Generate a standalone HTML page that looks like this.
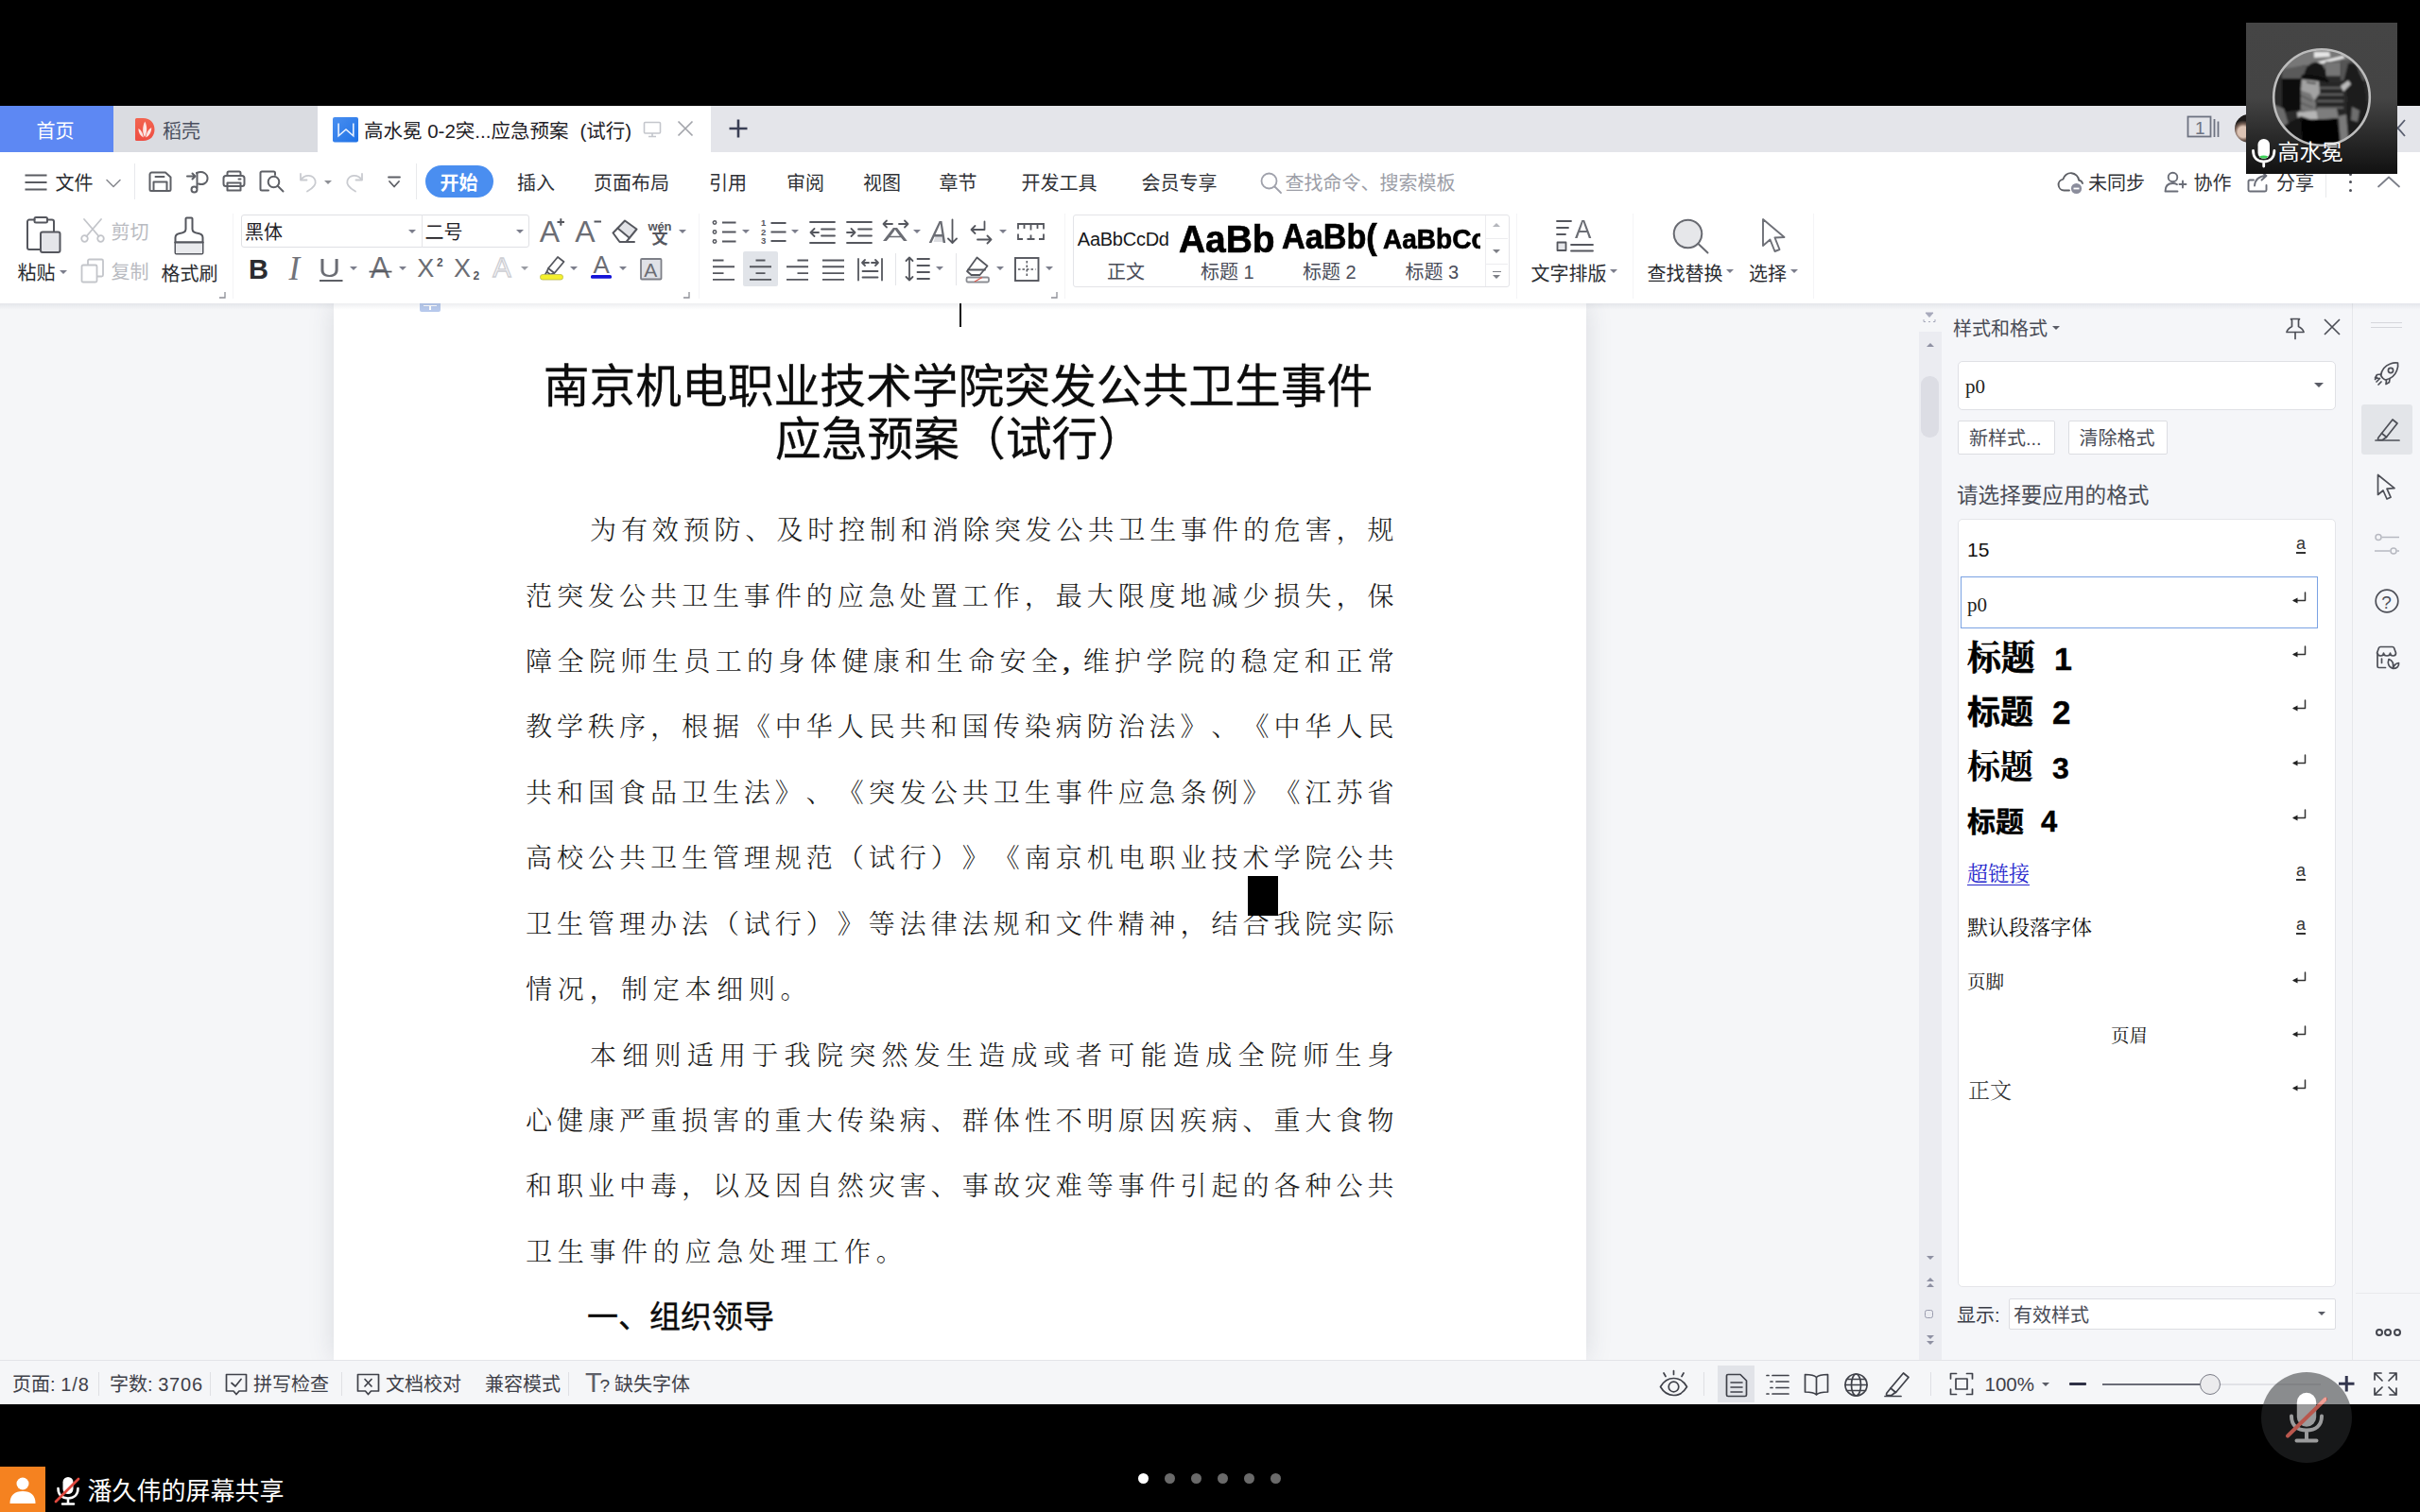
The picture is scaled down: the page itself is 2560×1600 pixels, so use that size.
<!DOCTYPE html>
<html lang="zh-CN">
<head>
<meta charset="utf-8">
<title>WPS 屏幕共享</title>
<style>
*{box-sizing:border-box;margin:0;padding:0}
html,body{width:2560px;height:1600px;overflow:hidden;background:#000}
body{position:relative;font-family:"Liberation Sans","Noto Sans CJK SC",sans-serif;color:#2b2d33;font-size:20px}
.abs{position:absolute}
.t{position:absolute;white-space:nowrap;line-height:1}
svg{position:absolute;overflow:visible}
.ic{fill:none;stroke:#4a4c52;stroke-width:2;stroke-linecap:round;stroke-linejoin:round}
.dd{position:absolute;width:0;height:0;border-left:4px solid transparent;border-right:4px solid transparent;border-top:4.5px solid #5f6167}
.sep{position:absolute;width:1px;background:#e6e7ea}
#tabs{left:0;top:112px;width:2560px;height:49px;background:#e4e5ea}
#menu{left:0;top:161px;width:2560px;height:61px;background:#fff}
#ribbon{left:0;top:222px;width:2560px;height:99px;background:#fff;z-index:3}
#doc{left:0;top:320px;width:2030px;height:1119px;background:#f5f6f8;overflow:hidden}
#page{left:353px;top:0;width:1325px;height:1119px;background:#fff;box-shadow:0 0 26px rgba(60,70,90,.15)}
#vscroll{left:2030px;top:320px;width:24px;height:1119px;background:#ebecf1}
#panel{left:2054px;top:320px;width:434px;height:1119px;background:#f5f6f9}
#side{left:2488px;top:320px;width:72px;height:1119px;background:#f5f6f9}
#status{left:0;top:1439px;width:2560px;height:47px;background:#f5f6f8;border-top:1px solid #e3e4e8}
#bottom{left:0;top:1486px;width:2560px;height:114px;background:#000}
.body{text-spacing-trim:space-all;font-family:"Liberation Serif","Noto Serif CJK SC",serif;font-weight:300;font-size:28px;color:#1c1c1c;line-height:1;white-space:nowrap;position:absolute}
.j{text-align:justify;text-align-last:justify;width:918.5px;left:203px}
.ttl{font-family:"Liberation Sans","Noto Sans CJK SC",sans-serif;font-size:48.75px;color:#0c0c0c;font-weight:400;-webkit-text-stroke:0.3px #0c0c0c}
.hd{font-family:"Liberation Sans","Noto Sans CJK SC",sans-serif;font-size:33px;color:#0c0c0c;font-weight:400;-webkit-text-stroke:0.35px #0c0c0c}
</style>
</head>
<body>
<div class="abs" id="tabs">
<div class="abs" style="left:0;top:0;width:120px;height:49px;background:#5d88f3"></div>
<div class="t" style="left:38.5px;top:16.7px;font-size:20px;color:#fff;">首页</div>
<div class="abs" style="left:120px;top:0;width:216px;height:49px;background:#dadce1"></div>
<svg style="left:143px;top:13.4px" width="21" height="24" viewBox="0 0 21 24"><defs><linearGradient id="dk" x1="0" y1="0" x2="0" y2="1"><stop offset="0" stop-color="#f2644f"/><stop offset="1" stop-color="#ee4d42"/></linearGradient></defs><path d="M1.500 0h7c7.500 0 12 5 12 12s-4.500 12-12 12h-7a1.500 1.500 0 0 1-1.500-1.500v-21a1.500 1.500 0 0 1 1.500-1.500z" fill="url(#dk)"/><g fill="#fff" opacity=".85"><path d="M10 20c-2.500-4.500-2.500-11 .3-16.500 2.700 5.500 2.500 12-.3 16.500z"/><path d="M8.800 20.500c-3-1.500-5.500-5-5.300-9.500 2.800 1.800 4.800 5 5.300 9.500z"/><path d="M11.200 20.500c.5-4.500 2.500-8.500 6-10.500 .2 5-2.500 9-6 10.500z"/></g></svg>
<div class="t" style="left:172.0px;top:17.2px;font-size:20px;color:#4b5060;">稻壳</div>
<div class="abs" style="left:336px;top:0;width:416px;height:49px;background:#fff"></div>
<svg style="left:352px;top:12px" width="27" height="26.500" viewBox="0 0 27 26.500"><defs><linearGradient id="wg" x1="0" y1="0" x2="1" y2="1"><stop offset="0" stop-color="#4a8ff0"/><stop offset="1" stop-color="#1f72e6"/></linearGradient></defs><rect width="27" height="26.500" rx="2" fill="url(#wg)"/><path d="M6.100 6.400V19.800L14 13L21.800 19.800V6.400" fill="none" stroke="#e8f1ff" stroke-width="1.600" stroke-linejoin="miter"/></svg>
<div class="t" style="left:385.0px;top:17.4px;font-size:20.5px;color:#1f2126;">高水冕 0-2突...应急预案<span style="display:inline-block;width:12px"></span>(试行)</div>
<svg style="left:680px;top:15px" width="20" height="20" viewBox="0 0 20 20"><g fill="none" stroke="#c4c6cc" stroke-width="1.600"><rect x="1.500" y="2.500" width="17" height="11.500" rx="1"/><path d="M10 14v3.500M6 17.500h8"/></g></svg>
<svg style="left:716px;top:15px" width="18" height="18" viewBox="0 0 18 18"><path d="M1.500 1.500l15 15M16.500 1.500l-15 15" stroke="#a3a5ab" stroke-width="1.700" fill="none"/></svg>
<svg style="left:770px;top:13px" width="22" height="22" viewBox="0 0 22 22"><path d="M11 1.500v19M1.500 11h19" stroke="#3a3f55" stroke-width="2.600" fill="none"/></svg>
<svg style="left:2313px;top:10px" width="36" height="26" viewBox="0 0 36 26"><g fill="none" stroke="#6e7382" stroke-width="1.800"><rect x="1.500" y="1.500" width="24" height="21"/><path d="M29.500 4v19M33.500 6.500v16.500"/></g></svg>
<div class="t" style="left:2322.0px;top:14.1px;font-size:19px;color:#6e7382;">1</div>
<div class="abs" style="left:2364px;top:9px;width:30px;height:30px;border-radius:50%;background:radial-gradient(circle at 30% 62%,#dcc3b4 0 20%,#7a6358 30%,#1b1918 44%)"></div>
<svg style="left:2527px;top:14px" width="18" height="20" viewBox="0 0 18 20"><path d="M2 1l15 17M17 1L2 18" stroke="#5a5f70" stroke-width="1.800" fill="none"/></svg>
</div>
<div class="abs" id="menu">
<svg style="left:25.500px;top:22.6px" width="24" height="18" viewBox="0 0 24 18"><path d="M.5 1.500h23M.5 9h23M.5 16.500h23" stroke="#5a5c62" stroke-width="1.800" fill="none"/></svg>
<div class="t" style="left:58.5px;top:22.8px;font-size:20px;color:#2a2c31;">文件</div>
<svg style="left:112px;top:27.6px" width="16" height="10" viewBox="0 0 16 10"><path d="M1 1.500l7 7 7-7" class="ic" style="stroke:#8a8c92;stroke-width:1.600"/></svg>
<div class="sep" style="left:142px;top:12px;height:38px;background:#e8e9ec"></div>
<svg style="left:157px;top:19.500px" width="25" height="22" viewBox="0 0 25 22"><g class="ic" style="stroke:#5e6066"><path d="M1.500 3.500a2 2 0 0 1 2-2h14.500l5.500 5v13a1.500 1.500 0 0 1-1.500 1.500h-19a1.500 1.500 0 0 1-1.500-1.500z"/><path d="M5.500 21v-9.500h14v9.500M7.500 6h9"/></g></svg>
<svg style="left:197px;top:19px" width="24" height="25" viewBox="0 0 24 25"><g class="ic" style="stroke:#5e6066"><path d="M1 6.500h8M6.500 3.500l3 3-3 3"/><path d="M11 3c7-3 12 1.500 11.500 6.500-.5 4.500-5 6.500-9.500 5"/><path d="M11.500 3v15.500"/><circle cx="8.500" cy="20.500" r="3"/></g></svg>
<svg style="left:235px;top:19px" width="25" height="23" viewBox="0 0 25 23"><g class="ic" style="stroke:#5e6066"><path d="M5.500 6v-3a1.500 1.500 0 0 1 1.500-1.500h11a1.500 1.500 0 0 1 1.500 1.500v3"/><rect x="1.500" y="6" width="22" height="11" rx="2.500"/><path d="M5.500 13.500h14v8h-14zM17.500 9.500h2"/></g></svg>
<svg style="left:273.500px;top:19px" width="27" height="24" viewBox="0 0 27 24"><g class="ic" style="stroke:#5e6066"><path d="M10 21.500h-7a1.500 1.500 0 0 1-1.500-1.500v-17a1.500 1.500 0 0 1 1.500-1.500h12.500a1.500 1.500 0 0 1 1.500 1.500v2"/><circle cx="15.500" cy="12.500" r="5.800"/><path d="M20 17l5.500 5.500"/></g></svg>
<svg style="left:316px;top:21px" width="20" height="22" viewBox="0 0 20 22"><g class="ic" style="stroke:#c9cbd0;stroke-width:1.800"><path d="M2 2v6.500h6.500"/><path d="M2.500 8c4-6 13-5.500 15 1 1.500 5-3 8.500-8.500 11.500"/></g></svg>
<div class="dd" style="left:342.500px;top:29.500px;border-top-color:#8e9096"></div>
<svg style="left:365px;top:21px" width="20" height="22" viewBox="0 0 20 22"><g class="ic" style="stroke:#c9cbd0;stroke-width:1.800"><path d="M18 2v6.500h-6.500"/><path d="M17.500 8c-4-6-13-5.500-15 1-1.500 5 3 8.500 8.500 11.500"/></g></svg>
<svg style="left:410px;top:25px" width="14" height="13" viewBox="0 0 14 13"><path d="M1 1.500h12M2 6l5 5.500 5-5.500" class="ic" style="stroke:#5e6066;stroke-width:1.800"/></svg>
<div class="sep" style="left:439.500px;top:12px;height:38px;background:#e8e9ec"></div>
<div class="abs" style="left:449.500px;top:14px;width:72px;height:34px;border-radius:17px;background:#4a8ef0"></div>
<div class="t" style="left:465.5px;top:22.8px;font-size:20px;color:#fff;font-weight:700;">开始</div>
<div class="t" style="left:547.0px;top:22.8px;font-size:20px;color:#2f3136;">插入</div>
<div class="t" style="left:628.0px;top:22.8px;font-size:20px;color:#2f3136;">页面布局</div>
<div class="t" style="left:750.0px;top:22.8px;font-size:20px;color:#2f3136;">引用</div>
<div class="t" style="left:832.0px;top:22.8px;font-size:20px;color:#2f3136;">审阅</div>
<div class="t" style="left:913.0px;top:22.8px;font-size:20px;color:#2f3136;">视图</div>
<div class="t" style="left:993.5px;top:22.8px;font-size:20px;color:#2f3136;">章节</div>
<div class="t" style="left:1080.5px;top:22.8px;font-size:20px;color:#2f3136;">开发工具</div>
<div class="t" style="left:1207.5px;top:22.8px;font-size:20px;color:#2f3136;">会员专享</div>
<svg style="left:1332.500px;top:20.6px" width="23" height="23" viewBox="0 0 23 23"><g class="ic" style="stroke:#9fa1ab;stroke-width:1.800"><circle cx="9.500" cy="9.500" r="8"/><path d="M15.500 15.500l6.500 6.500"/></g></svg>
<div class="t" style="left:1359.5px;top:22.8px;font-size:20px;color:#9c9ea7;">查找命令、搜索模板</div>
<svg style="left:2175.500px;top:19px" width="30" height="26" viewBox="0 0 30 26"><g class="ic" style="stroke:#5e6066;stroke-width:1.900"><path d="M13 21.500h-5.500a6 6 0 0 1-1-11.900 8.500 8.500 0 0 1 16.700 1.200c1.800 .3 3.300 1.500 3.800 3.200"/></g><circle cx="20.500" cy="19.500" r="5.600" fill="#8b8d9c"/><path d="M17.500 19.500h6" stroke="#fff" stroke-width="1.800"/></svg>
<div class="t" style="left:2209.0px;top:22.8px;font-size:20px;color:#2f3136;">未同步</div>
<svg style="left:2289px;top:20px" width="25" height="24" viewBox="0 0 25 24"><g class="ic" style="stroke:#6b6e78;stroke-width:1.900"><circle cx="9.500" cy="6.500" r="4.800"/><path d="M1.500 21.500c0-6 3.500-8.500 8-8.500 2 0 3.500 .5 4.500 1.200M1.500 21.500h13M20 10.500v7M16.500 14h7"/></g></svg>
<div class="t" style="left:2320.5px;top:22.8px;font-size:20px;color:#2f3136;">协作</div>
<svg style="left:2377px;top:20px" width="25" height="23" viewBox="0 0 25 23"><g class="ic" style="stroke:#6b6e78;stroke-width:1.900"><path d="M7 9.500h-4a1.500 1.500 0 0 0-1.500 1.500v9a1.500 1.500 0 0 0 1.500 1.500h16a1.500 1.500 0 0 0 1.500-1.500v-5"/><path d="M8 15.500c.5-6 4.500-10 12-10.500M15.500 1l5 4-5 4.500"/></g></svg>
<div class="t" style="left:2408.0px;top:22.8px;font-size:20px;color:#2f3136;">分享</div>
<div class="sep" style="left:2460px;top:14px;height:34px;background:#e8e9ec"></div>
<div class="abs" style="left:2484.500px;top:21.6px;width:3px;height:3px;border-radius:50%;background:#4d4f57"></div>
<div class="abs" style="left:2484.500px;top:30.1px;width:3px;height:3px;border-radius:50%;background:#4d4f57"></div>
<div class="abs" style="left:2484.500px;top:38.6px;width:3px;height:3px;border-radius:50%;background:#4d4f57"></div>
<svg style="left:2515px;top:24.6px" width="24" height="13" viewBox="0 0 24 13"><path d="M1 11.500l11-10 11 10" class="ic" style="stroke:#7b7e88;stroke-width:1.700"/></svg>
</div>
<div class="abs" id="ribbon">
<svg style="left:27.0px;top:7.0px" width="38" height="40" viewBox="0 0 38 40"><g class="ic" style="stroke:#55575e"><path d="M9.500 3.500h-5.500a2 2 0 0 0-2 2v27.500a2 2 0 0 0 2 2h11"/><path d="M23 3.500h5a2 2 0 0 1 2 2v10"/><rect x="9.500" y="1" width="13.500" height="5.500" rx="1.500"/><rect x="16" y="16.500" width="20.500" height="21.500" rx="2" fill="#e4e5e9"/></g></svg>
<div class="t" style="left:18.5px;top:57.1px;font-size:20px;color:#2a2c31;">粘贴</div>
<div class="dd" style="left:63.0px;top:63.5px;border-top-color:#7c7e8c"></div>
<svg style="left:85.0px;top:9.0px" width="27" height="26" viewBox="0 0 27 26"><g class="ic" style="stroke:#c3c5ca;stroke-width:1.800"><path d="M4 1l15.500 18M22 1L6.500 19"/><circle cx="4.500" cy="21.500" r="3.300"/><circle cx="21.500" cy="21.500" r="3.300"/></g></svg>
<div class="t" style="left:117.5px;top:14.3px;font-size:20px;color:#b9bbc1;">剪切</div>
<svg style="left:85.0px;top:50.5px" width="26" height="27" viewBox="0 0 26 27"><g class="ic" style="stroke:#c3c5ca;stroke-width:1.800"><path d="M8 7v-4a1.500 1.500 0 0 1 1.500-1.500h13a1.500 1.500 0 0 1 1.500 1.500v15a1.500 1.500 0 0 1-1.500 1.500h-4.500"/><rect x="1.500" y="7.500" width="16" height="18" rx="1.500"/></g></svg>
<div class="t" style="left:117.5px;top:56.0px;font-size:20px;color:#b9bbc1;">复制</div>
<svg style="left:184.0px;top:7.0px" width="32" height="41" viewBox="0 0 32 41"><g class="ic" style="stroke:#55575e"><path d="M12.500 2.500a1 1 0 0 1 1-1h5a1 1 0 0 1 1 1v11c0 2.500 2.500 4 6.500 4.500 3 .5 4.500 2 4.500 4.500v16a1 1 0 0 1-1 1h-27a1 1 0 0 1-1-1v-16c0-2.500 1.500-4 4.500-4.500 4-.5 6.500-2 6.500-4.500z" fill="#fff"/><path d="M1.500 27.500h29" /><path d="M2 28h28v11h-28z" fill="#e9eaed" stroke="none"/><path d="M1.500 27.500h29"/></g></svg>
<div class="t" style="left:170.5px;top:57.7px;font-size:20px;color:#2a2c31;">格式刷</div>
<svg style="left:230.5px;top:86.0px" width="8" height="8" viewBox="0 0 8 8"><path d="M7 1v6h-6" fill="none" stroke="#8d8f96" stroke-width="1.300"/></svg>
<div class="sep" style="left:246.0px;top:4px;height:90px;background:#f4f4f6"></div>
<div class="abs" style="left:255px;top:4.500px;width:305px;height:35.500px;border:1px solid #dfe0e4;border-radius:3px;background:#fff"></div>
<div class="sep" style="left:445.500px;top:5px;height:34.500px;background:#e4e5e8"></div>
<div class="t" style="left:259.0px;top:14.2px;font-size:20px;color:#1f2126;">黑体</div>
<div class="dd" style="left:432.0px;top:20.5px;border-top-color:#7c7e8c"></div>
<div class="t" style="left:449.5px;top:14.2px;font-size:20px;color:#1f2126;">二号</div>
<div class="dd" style="left:545.5px;top:20.5px;border-top-color:#7c7e8c"></div>
<div class="t" style="left:570.7px;top:6.7px;font-size:32px;color:#6b6d74;">A</div>
<svg style="left:571.0px;top:7.5px" width="28" height="27" viewBox="0 0 28 27"><path d="M18.500 5h7.500M22.300 1.300v7.500" stroke="#55575e" stroke-width="2" fill="none"/></svg>
<div class="t" style="left:608.2px;top:6.7px;font-size:32px;color:#6b6d74;">A</div>
<svg style="left:608.5px;top:7.5px" width="28" height="27" viewBox="0 0 28 27"><path d="M19.500 4.500h7.500" stroke="#55575e" stroke-width="2" fill="none"/></svg>
<svg style="left:647.0px;top:10.0px" width="28" height="26" viewBox="0 0 28 26"><path d="M6.500 9.500L14 1.500l12.500 9-7.500 9z" fill="#e1e2e6"/><g class="ic" style="stroke:#55575e"><path d="M1.500 14.500l12.500-13 12.500 9-11 13.500h-7z"/><path d="M6.500 9.500l12 10"/><path d="M15 24h9"/></g></svg>
<div class="t" style="left:685.5px;top:11.4px;font-size:13px;color:#55575e;font-weight:700;letter-spacing:-0.2px;">wén</div>
<div class="t" style="left:689.5px;top:22.1px;font-size:17px;color:#55575e;font-weight:700;">文</div>
<div class="dd" style="left:718.0px;top:20.5px;border-top-color:#7c7e8c"></div>
<div class="t" style="left:263.0px;top:49.2px;font-size:29px;color:#2a2c31;font-weight:700;">B</div>
<div class="t" style="left:305.5px;top:44.8px;font-size:35px;color:#71737a;font-family:'Liberation Serif',serif;font-style:italic;">I</div>
<div class="t" style="left:337.2px;top:47.1px;font-size:28.5px;color:#6b6d74;transform:scaleX(1.12);transform-origin:0 0;">U</div>
<svg style="left:338.0px;top:50.0px" width="25" height="27" viewBox="0 0 25 27"><path d="M0 25h24.500" fill="none" stroke="#55575e" stroke-width="1.900"/></svg>
<div class="dd" style="left:370.0px;top:59.7px;border-top-color:#7c7e8c"></div>
<div class="t" style="left:391.8px;top:47.3px;font-size:30.7px;color:#6b6d74;">A</div>
<svg style="left:390.0px;top:49.5px" width="25" height="26" viewBox="0 0 25 26"><path d="M.5 15.500h24" stroke="#55575e" stroke-width="1.700"/></svg>
<div class="dd" style="left:422.0px;top:59.7px;border-top-color:#7c7e8c"></div>
<div class="t" style="left:441.3px;top:48.8px;font-size:27px;color:#6b6d74;">X</div>
<div class="t" style="left:462.0px;top:50.4px;font-size:12px;color:#55575e;font-weight:700;">2</div>
<div class="t" style="left:480.0px;top:48.8px;font-size:27px;color:#6b6d74;">X</div>
<div class="t" style="left:500.5px;top:64.4px;font-size:12px;color:#55575e;font-weight:700;">2</div>
<div class="t" style="left:521.3px;top:47.2px;font-size:29px;color:#fafafb;-webkit-text-stroke:1.300px #cdced3;">A</div>
<div class="dd" style="left:550.8px;top:59.7px;border-top-color:#9a9ca3"></div>
<svg style="left:571.0px;top:48.0px" width="26" height="29" viewBox="0 0 26 29"><g class="ic" style="stroke:#55575e;stroke-width:1.800"><path d="M9 14l10-12 6.500 5-10 12z"/><path d="M9 14l-1.500 3.500 3.500 3 4-1.500M7.500 17.500l-2 3.500"/></g><rect x="0.500" y="20.500" width="24" height="5.500" rx="2.500" fill="#f4f02c" stroke="#b9b84a" stroke-width="0.800"/></svg>
<div class="dd" style="left:603.0px;top:59.7px;border-top-color:#7c7e8c"></div>
<div class="t" style="left:627.6px;top:45.9px;font-size:25.8px;color:#6b6d74;">A</div>
<svg style="left:624.5px;top:48.0px" width="23" height="29" viewBox="0 0 23 29"><rect x="0" y="21" width="22" height="3.800" rx="1.500" fill="#1414d8"/></svg>
<div class="dd" style="left:655.0px;top:59.7px;border-top-color:#7c7e8c"></div>
<svg style="left:676.5px;top:50.5px" width="24" height="24" viewBox="0 0 24 24"><rect x="1" y="1" width="21.500" height="21.500" rx="1" fill="#e0e2e7" stroke="#7d7f87" stroke-width="1.800"/></svg>
<div class="t" style="left:681.3px;top:52.5px;font-size:21px;color:#6b6d74;">A</div>
<svg style="left:722.0px;top:86.0px" width="8" height="8" viewBox="0 0 8 8"><path d="M7 1v6h-6" fill="none" stroke="#8d8f96" stroke-width="1.300"/></svg>
<div class="sep" style="left:738.5px;top:4px;height:90px;background:#f4f4f6"></div>
<svg style="left:753.0px;top:11.0px" width="27" height="25" viewBox="0 0 27 25"><g fill="#fff" stroke="#55575e" stroke-width="1.500"><circle cx="3" cy="2.500" r="1.700"/><circle cx="3" cy="12.500" r="1.700"/><circle cx="3" cy="22.500" r="1.700"/></g><path d="M11 2.500h14.500M11 12.500h14.500M11 22.500h14.500" stroke="#55575e" stroke-width="1.800" fill="none"/></svg>
<div class="dd" style="left:784.5px;top:20.5px;border-top-color:#7c7e8c"></div>
<svg style="left:805.0px;top:9.0px" width="27" height="28" viewBox="0 0 27 28"><path d="M10.500 5h16M10.500 14.500h16M10.500 24h16" stroke="#55575e" stroke-width="1.800" fill="none"/><text x="0" y="8" font-size="9.500" font-weight="700" fill="#55575e" font-family="Liberation Sans,sans-serif">1</text><text x="0" y="17.500" font-size="9.500" font-weight="700" fill="#55575e" font-family="Liberation Sans,sans-serif">2</text><text x="0" y="27" font-size="9.500" font-weight="700" fill="#55575e" font-family="Liberation Sans,sans-serif">3</text></svg>
<div class="dd" style="left:836.5px;top:20.5px;border-top-color:#7c7e8c"></div>
<svg style="left:856.0px;top:11.0px" width="28" height="25" viewBox="0 0 28 25"><path d="M1 2h26M13 9.500h14M13 16.500h14M1 24h26M10 13H1.500M5.500 9l-4 4 4 4" stroke="#55575e" stroke-width="1.800" fill="none" stroke-linecap="round" stroke-linejoin="round"/></svg>
<svg style="left:895.0px;top:11.0px" width="28" height="25" viewBox="0 0 28 25"><path d="M1 2h26M13 9.500h14M13 16.500h14M1 24h26M1 13h8.500M5.500 9l4 4-4 4" stroke="#55575e" stroke-width="1.800" fill="none" stroke-linecap="round" stroke-linejoin="round"/></svg>
<svg style="left:933.0px;top:9.0px" width="29" height="28" viewBox="0 0 29 28"><g class="ic" style="stroke:#55575e;stroke-width:1.800"><path d="M1.500 6h9.500M18 6h9.500M5 2.500l-3.500 3.500 3.500 3.500M24 2.500l3.500 3.500-3.500 3.500"/></g></svg>
<div class="t" style="left:934.3px;top:16.8px;font-size:19.5px;color:#6b6d74;transform:scaleX(1.98);transform-origin:0 0;">A</div>
<div class="dd" style="left:966.0px;top:20.5px;border-top-color:#7c7e8c"></div>
<svg style="left:985.0px;top:9.0px" width="29" height="28" viewBox="0 0 29 28"><path d="M2.500 25l2.500-7h8v7z" fill="#dcdde1"/><g class="ic" style="stroke:#55575e;stroke-width:1.800"><path d="M22.500 1.500v24M18 21.500l4.500 4.500 4.500-4.500"/></g></svg>
<div class="t" style="left:983.5px;top:6.6px;font-size:33px;color:#6b6d74;font-style:italic;transform:scaleX(.8);transform-origin:0 0;">A</div>
<svg style="left:1025.0px;top:11.0px" width="26" height="26" viewBox="0 0 26 26"><g class="ic" style="stroke:#55575e;stroke-width:1.800"><path d="M16.500 1.500v8.500h-14M6.500 6l-4 4 4 4"/><path d="M9 20.500h14.500M19.500 16.500l4 4-4 4"/></g></svg>
<div class="dd" style="left:1057.0px;top:20.5px;border-top-color:#7c7e8c"></div>
<svg style="left:1075.5px;top:14.0px" width="29" height="18" viewBox="0 0 29 18"><g fill="none" stroke="#55575e" stroke-width="1.800"><path d="M1 6.500v-5.500h27v5.500M7.500 1v5M14.500 1v6.500M21.500 1v5"/><path d="M1 11.500v5.500h5M10.500 17h8M14.500 12.500v4.500M23 17h5v-5.500" /></g></svg>
<svg style="left:754.0px;top:50.5px" width="24" height="26" viewBox="0 0 24 26"><path d="M0 2.5H11.5M0 9.3H23M0 16.1H11.5M0 22.9H23" stroke="#55575e" stroke-width="1.900" fill="none"/></svg>
<div class="abs" style="left:786px;top:43.500px;width:37px;height:37px;background:#e1e4e9;border-radius:2px"></div>
<svg style="left:793.0px;top:50.5px" width="24" height="26" viewBox="0 0 24 26"><path d="M6.5 2.5H16.5M0 9.3H23M6.5 16.1H16.5M0 22.9H23" stroke="#55575e" stroke-width="1.900" fill="none"/></svg>
<svg style="left:832.0px;top:50.5px" width="24" height="26" viewBox="0 0 24 26"><path d="M11.5 2.5H23M0 9.3H23M11.5 16.1H23M0 22.9H23" stroke="#55575e" stroke-width="1.900" fill="none"/></svg>
<svg style="left:870.0px;top:50.5px" width="24" height="26" viewBox="0 0 24 26"><path d="M0 2.5H23M0 9.3H23M0 16.1H23M0 22.9H23" stroke="#55575e" stroke-width="1.900" fill="none"/></svg>
<svg style="left:906.5px;top:50.5px" width="27" height="25" viewBox="0 0 27 25"><g fill="none" stroke="#55575e" stroke-width="1.800" stroke-linecap="round" stroke-linejoin="round"><path d="M1 1v22.500M26 1v22.500M5 5h7M15 5h7M8 2l-3 3 3 3M19 2l3 3-3 3"/><path d="M5.500 14h16M5.500 20.500h16"/></g></svg>
<div class="sep" style="left:946.5px;top:46px;height:34px;background:#e4e5e8"></div>
<svg style="left:956.5px;top:49.0px" width="28" height="27" viewBox="0 0 28 27"><g fill="none" stroke="#55575e" stroke-width="1.800" stroke-linecap="round" stroke-linejoin="round"><path d="M5 1.500v24M1.500 5l3.500-3.500 3.500 3.500M1.500 22l3.500 3.500 3.500-3.500"/><path d="M13.500 3h12.500M13.500 10h12.500M13.500 17h12.500M13.500 24h12.500"/></g></svg>
<div class="dd" style="left:990.0px;top:59.7px;border-top-color:#7c7e8c"></div>
<div class="sep" style="left:1010.5px;top:46px;height:34px;background:#e4e5e8"></div>
<svg style="left:1021.0px;top:48.5px" width="27" height="29" viewBox="0 0 27 29"><g class="ic" style="stroke:#55575e;stroke-width:1.800"><path d="M12.500 1.500l11 9-8 9.500h-9l-4.500-4z"/><path d="M3 14.500h18"/><rect x="1.500" y="22.500" width="23.500" height="5" rx="1.500" style="stroke:#8b8d93"/></g><path d="M10 27l8-4.500" stroke="#e05a4e" stroke-width="1.300"/></svg>
<div class="dd" style="left:1054.0px;top:59.7px;border-top-color:#7c7e8c"></div>
<svg style="left:1073.0px;top:50.0px" width="27" height="26" viewBox="0 0 27 26"><rect x="1" y="1" width="24.500" height="24" fill="none" stroke="#55575e" stroke-width="1.900"/><path d="M13.300 4v18M4 13h18.500" stroke="#55575e" stroke-width="1.500" stroke-dasharray="2.500 2" fill="none"/></svg>
<div class="dd" style="left:1106.0px;top:59.7px;border-top-color:#7c7e8c"></div>
<svg style="left:1111.0px;top:86.0px" width="8" height="8" viewBox="0 0 8 8"><path d="M7 1v6h-6" fill="none" stroke="#8d8f96" stroke-width="1.300"/></svg>
<div class="sep" style="left:1126.0px;top:4px;height:90px;background:#f4f4f6"></div>
<div class="abs" style="left:1135px;top:5px;width:461.500px;height:77px;border:1px solid #e3e4e8;border-radius:3px;background:#fff;overflow:hidden"></div>
<div class="sep" style="left:1570.500px;top:6px;height:75px;background:#ececef"></div>
<div class="abs" style="left:1571px;top:29.500px;width:24px;height:1px;background:#ececef"></div><div class="abs" style="left:1571px;top:56.500px;width:24px;height:1px;background:#ececef"></div>
<div class="t" style="left:1139.8px;top:20.7px;font-size:20px;color:#16171a;letter-spacing:-0.25px;">AaBbCcDd</div>
<div class="t" style="left:1171.0px;top:56.3px;font-size:20px;color:#4a4d59;">正文</div>
<div class="abs" style="left:1245.0px;top:6px;width:106.5px;height:52px;overflow:hidden"><div class="t" style="left:2.3px;top:4.5px;font-size:41.4px;font-weight:700;color:#000;-webkit-text-stroke:0.7px #000;transform:scaleX(0.94);transform-origin:0 0">AaBb</div></div>
<div class="t" style="left:1270.0px;top:56.3px;font-size:20px;color:#4a4d59;">标题 1</div>
<div class="abs" style="left:1354.0px;top:6px;width:104.3px;height:52px;overflow:hidden"><div class="t" style="left:1.5px;top:4.4px;font-size:37.6px;font-weight:700;color:#000;-webkit-text-stroke:0.7px #000;transform:scaleX(0.91);transform-origin:0 0">AaBb(</div></div>
<div class="t" style="left:1378.0px;top:56.3px;font-size:20px;color:#4a4d59;">标题 2</div>
<div class="abs" style="left:1461.0px;top:6px;width:105.3px;height:52px;overflow:hidden"><div class="t" style="left:2.3px;top:9.7px;font-size:30px;font-weight:700;color:#000;-webkit-text-stroke:0.7px #000;transform:scaleX(0.935);transform-origin:0 0">AaBbCc</div></div>
<div class="t" style="left:1486.5px;top:56.3px;font-size:20px;color:#4a4d59;">标题 3</div>
<div class="dd" style="left:1579px;top:14px;border-top:none;border-bottom:4.500px solid #b4b6bc"></div>
<div class="dd" style="left:1579px;top:42px;border-top-color:#7d7f86"></div><div class="abs" style="left:1579px;top:39px;width:8px;height:1.500px;background:#7d7f86;display:none"></div>
<div class="abs" style="left:1578.500px;top:64.500px;width:9px;height:1.600px;background:#7d7f86"></div><div class="dd" style="left:1579px;top:68.500px;border-top-color:#7d7f86"></div>
<div class="sep" style="left:1604.0px;top:4px;height:90px;background:#f4f4f6"></div>
<svg style="left:1646.0px;top:9.5px" width="41" height="36" viewBox="0 0 41 36"><g fill="none" stroke="#55575e" stroke-width="1.800" stroke-linecap="round" stroke-linejoin="round"><path d="M1 2h15M1 9h12M1 16h9"/><rect x="1.500" y="24.500" width="9" height="8.500" fill="#e6e7ea"/><path d="M16 33.500h23M16 27h23"/></g></svg>
<div class="t" style="left:1665.8px;top:7.1px;font-size:28px;color:#6b6d74;transform:scaleX(.93);transform-origin:0 0;">A</div>
<div class="t" style="left:1619.5px;top:57.7px;font-size:20px;color:#2a2c31;">文字排版</div>
<div class="dd" style="left:1703.0px;top:63.0px;border-top-color:#7c7e8c"></div>
<div class="sep" style="left:1726.5px;top:4px;height:90px;background:#f4f4f6"></div>
<svg style="left:1769.0px;top:7.5px" width="40" height="40" viewBox="0 0 40 40"><g fill="none" stroke="#686a71" stroke-width="2" stroke-linecap="round"><circle cx="16.500" cy="17.500" r="14.800" fill="#e6e7ea"/><path d="M27.500 28l10 9.500"/></g></svg>
<div class="t" style="left:1742.5px;top:57.7px;font-size:20px;color:#2a2c31;">查找替换</div>
<div class="dd" style="left:1825.5px;top:63.0px;border-top-color:#7c7e8c"></div>
<svg style="left:1863.0px;top:8.0px" width="28" height="39" viewBox="0 0 28 39"><path d="M2 2v28l7.500-6.500 5 12.500 5-2-5-12.500 10-.5z" fill="none" stroke="#6e7077" stroke-width="1.900" stroke-linejoin="round"/></svg>
<div class="t" style="left:1850.0px;top:57.7px;font-size:20px;color:#2a2c31;">选择</div>
<div class="dd" style="left:1893.5px;top:63.0px;border-top-color:#7c7e8c"></div>
<div class="sep" style="left:1917.5px;top:4px;height:90px;background:#f4f4f6"></div>
<div class="abs" style="left:0;top:99px;width:2560px;height:7px;background:linear-gradient(rgba(80,90,110,.10),rgba(80,90,110,0));z-index:5"></div>
</div>
<div class="abs" id="doc"><div class="abs" id="page">
<div class="abs" style="left:91px;top:0;width:22px;height:10px;background:#b7c9ec;border-radius:0 0 2px 2px"><div class="abs" style="left:4px;top:2.500px;width:14px;height:1.500px;background:#fff"></div><div class="abs" style="left:10.200px;top:2.500px;width:1.600px;height:5px;background:#fff"></div></div>
<div class="abs" style="left:662px;top:1px;width:2px;height:25px;background:#111"></div>
<div class="t ttl" style="left:-2px;width:1325px;text-align:center;top:64.8px">南京机电职业技术学院突发公共卫生事件</div>
<div class="t ttl" style="left:0;width:1325px;text-align:center;top:121.3px;left:-0.5px">应急预案（试行）</div>
<div class="body j" style="top:228.2px;left:271px;width:850.5px;">为有效预防、及时控制和消除突发公共卫生事件的危害，规</div>
<div class="body j" style="top:297.6px;">范突发公共卫生事件的应急处置工作，最大限度地减少损失，保</div>
<div class="body" style="top:366.9px;left:203px;letter-spacing:5.44px">障全院师生员工的身体健康和生命安全<span style="display:inline-block;width:21.2px;letter-spacing:0;font-weight:700">,</span>维护学院的稳定和正常</div>
<div class="body j" style="top:436.4px;">教学秩序，根据《中华人民共和国传染病防治法》、《中华人民</div>
<div class="body j" style="top:505.9px;">共和国食品卫生法》、《突发公共卫生事件应急条例》《江苏省</div>
<div class="body j" style="top:575.2px;">高校公共卫生管理规范（试行）》《南京机电职业技术学院公共</div>
<div class="body j" style="top:644.6px;">卫生管理办法（试行）》等法律法规和文件精神，结合我院实际</div>
<div class="body" style="top:714.0px;left:203px;letter-spacing:5.7px;">情况，制定本细则。</div>
<div class="body j" style="top:783.5px;left:271px;width:850.5px;">本细则适用于我院突然发生造成或者可能造成全院师生身</div>
<div class="body j" style="top:852.9px;">心健康严重损害的重大传染病、群体性不明原因疾病、重大食物</div>
<div class="body j" style="top:922.3px;">和职业中毒，以及因自然灾害、事故灾难等事件引起的各种公共</div>
<div class="body" style="top:991.8px;left:203px;letter-spacing:5.7px;">卫生事件的应急处理工作。</div>
<div class="t hd" style="left:268px;top:1056.7px">一、组织领导</div>
<div class="abs" style="left:967px;top:607px;width:32px;height:42px;background:#000"></div>
</div></div>
<div class="abs" id="vscroll">
<div class="abs" style="left:0.0px;top:0.0px;width:24.0px;height:31.0px;background:#f5f6f8"></div>
<svg style="left:3.5px;top:10.0px" width="14" height="12" viewBox="0 0 14 12"><path d="M3 1h8l-4 4.500zM1 10.500h2M6 10.500h2M11 10.500h2M1 8v2.500M13 8v2.500" fill="#a7a9bb" stroke="#a7a9bb" stroke-width="1"/></svg>
<div class="dd" style="left:8px;top:43px;border-top:none;border-bottom:4.500px solid #8f91a3"></div>
<div class="abs" style="left:2.0px;top:77.5px;width:19.0px;height:65.0px;background:#dcdde4;border-radius:9px"></div>
<div class="dd" style="left:8px;top:1009px;border-top-color:#8f91a3"></div>
<div class="dd" style="left:8px;top:1032px;border-top:none;border-bottom:4.500px solid #8f91a3"></div><div class="dd" style="left:8px;top:1038px;border-top:none;border-bottom:4.500px solid #8f91a3"></div>
<div class="abs" style="left:6.0px;top:1065.5px;width:9.0px;height:9.0px;border:1.500px solid #9a9cae;border-radius:2.500px"></div>
<div class="dd" style="left:8px;top:1093px;border-top-color:#8f91a3"></div><div class="dd" style="left:8px;top:1099px;border-top-color:#8f91a3"></div>
</div>
<div class="abs" id="panel">
<div class="t" style="left:12.0px;top:17.7px;font-size:20px;color:#4a4d57;">样式和格式</div>
<div class="dd" style="left:117px;top:25px;border-top-color:#5a5c66"></div>
<svg style="left:362.0px;top:16.0px" width="24" height="24" viewBox="0 0 24 24"><g fill="none" stroke="#4d4f57" stroke-width="1.700" stroke-linejoin="round" stroke-linecap="round"><path d="M7.500 1.500h9l-1 1.500v6.500c3 1.500 5 3.500 5.500 6h-18c.5-2.500 2.500-4.500 5.500-6v-6.500z"/><path d="M12 15.500v7"/></g></svg>
<svg style="left:404.0px;top:17.0px" width="18" height="18" viewBox="0 0 18 18"><path d="M1 1l16 16M17 1L1 17" stroke="#4d4f57" stroke-width="1.700" fill="none"/></svg>
<div class="abs" style="left:16.5px;top:62.0px;width:400.5px;height:52.0px;background:#fff;border:1px solid #dfe0e5;border-radius:5px"></div>
<div class="t" style="left:25.0px;top:78.7px;font-size:21px;color:#222;font-family:'Liberation Serif','Noto Serif CJK SC',serif;">p0</div>
<div class="dd" style="left:394px;top:85px;border-left-width:5px;border-right-width:5px;border-top-width:5.500px;border-top-color:#5a5c66"></div>
<div class="abs" style="left:16.5px;top:124.5px;width:103.0px;height:36.5px;background:#fff;border:1px solid #dcdde2;border-radius:2px"></div>
<div class="t" style="left:29.0px;top:134.2px;font-size:20px;color:#4a4d57;">新样式...</div>
<div class="abs" style="left:133.5px;top:124.5px;width:105.0px;height:36.5px;background:#fff;border:1px solid #dcdde2;border-radius:2px"></div>
<div class="t" style="left:145.5px;top:134.2px;font-size:20px;color:#4a4d57;">清除格式</div>
<div class="t" style="left:16.0px;top:194.0px;font-size:22.6px;color:#4a4d57;">请选择要应用的格式</div>
<div class="abs" style="left:16.5px;top:229.0px;width:400.5px;height:812.5px;background:#fff;border:1px solid #e4e5e9;border-radius:5px"></div>
<div class="t" style="left:27.0px;top:251.2px;font-size:21px;color:#111;">15</div>
<div class="t" style="left:375.0px;top:246.2px;font-size:18px;color:#333;text-decoration:underline;text-underline-offset:3px;text-decoration-thickness:1.500px;">a</div>
<div class="abs" style="left:20.0px;top:290.0px;width:378.0px;height:55.0px;border:1.500px solid #7aa2e3;background:#fff"></div>
<div class="t" style="left:27.0px;top:309.7px;font-size:21px;color:#222;font-family:'Liberation Serif','Noto Serif CJK SC',serif;">p0</div>
<svg style="left:371.0px;top:306.0px" width="15" height="14" viewBox="0 0 15 14"><g fill="none" stroke="#333" stroke-width="1.500" stroke-linecap="round" stroke-linejoin="round"><path d="M13.500 1v8.500h-12"/></g><path d="M0 9.500l5.500-3v6z" fill="#222"/></svg>
<div class="t" style="left:27.0px;top:358.7px;font-size:36px;color:#000;font-family:'Liberation Serif','Noto Serif CJK SC',serif;font-weight:700;-webkit-text-stroke:0.6px #000;">标题<span style="font-family:'Liberation Sans','Noto Sans CJK SC',sans-serif;font-weight:700;-webkit-text-stroke:0.4px #000;font-size:34px;margin-left:20px">1</span></div>
<svg style="left:371.0px;top:362.5px" width="15" height="14" viewBox="0 0 15 14"><g fill="none" stroke="#333" stroke-width="1.500" stroke-linecap="round" stroke-linejoin="round"><path d="M13.500 1v8.500h-12"/></g><path d="M0 9.500l5.500-3v6z" fill="#222"/></svg>
<div class="t" style="left:27.0px;top:415.7px;font-size:35px;color:#000;font-family:'Liberation Sans','Noto Sans CJK SC',sans-serif;font-weight:700;-webkit-text-stroke:0.4px #000;">标题<span style="font-family:'Liberation Sans','Noto Sans CJK SC',sans-serif;font-weight:700;-webkit-text-stroke:0.4px #000;font-size:35px;margin-left:20px">2</span></div>
<svg style="left:371.0px;top:420.0px" width="15" height="14" viewBox="0 0 15 14"><g fill="none" stroke="#333" stroke-width="1.500" stroke-linecap="round" stroke-linejoin="round"><path d="M13.500 1v8.500h-12"/></g><path d="M0 9.500l5.500-3v6z" fill="#222"/></svg>
<div class="t" style="left:27.0px;top:475.2px;font-size:35px;color:#000;font-family:'Liberation Serif','Noto Serif CJK SC',serif;font-weight:700;-webkit-text-stroke:0.15px #000;">标题<span style="font-family:'Liberation Sans','Noto Sans CJK SC',sans-serif;font-weight:700;-webkit-text-stroke:0.4px #000;font-size:32px;margin-left:20px">3</span></div>
<svg style="left:371.0px;top:478.0px" width="15" height="14" viewBox="0 0 15 14"><g fill="none" stroke="#333" stroke-width="1.500" stroke-linecap="round" stroke-linejoin="round"><path d="M13.500 1v8.500h-12"/></g><path d="M0 9.500l5.500-3v6z" fill="#222"/></svg>
<div class="t" style="left:27.0px;top:534.0px;font-size:30px;color:#000;font-family:'Liberation Sans','Noto Sans CJK SC',sans-serif;font-weight:700;-webkit-text-stroke:0.4px #000;">标题<span style="font-family:'Liberation Sans','Noto Sans CJK SC',sans-serif;font-weight:700;-webkit-text-stroke:0.4px #000;font-size:31px;margin-left:18px">4</span></div>
<svg style="left:371.0px;top:536.0px" width="15" height="14" viewBox="0 0 15 14"><g fill="none" stroke="#333" stroke-width="1.500" stroke-linecap="round" stroke-linejoin="round"><path d="M13.500 1v8.500h-12"/></g><path d="M0 9.500l5.500-3v6z" fill="#222"/></svg>
<div class="t" style="left:27.0px;top:594.2px;font-size:22px;color:#2525cc;font-family:'Liberation Serif','Noto Serif CJK SC',serif;text-decoration:underline;text-underline-offset:4px;text-decoration-thickness:1.300px;font-weight:400;">超链接</div>
<div class="t" style="left:375.0px;top:591.6px;font-size:18px;color:#333;text-decoration:underline;text-underline-offset:3px;text-decoration-thickness:1.500px;">a</div>
<div class="t" style="left:27.0px;top:650.7px;font-size:22px;color:#111;font-family:'Liberation Serif','Noto Serif CJK SC',serif;font-weight:400;">默认段落字体</div>
<div class="t" style="left:375.0px;top:649.2px;font-size:18px;color:#333;text-decoration:underline;text-underline-offset:3px;text-decoration-thickness:1.500px;">a</div>
<div class="t" style="left:27.0px;top:709.9px;font-size:19.5px;color:#111;font-family:'Liberation Serif','Noto Serif CJK SC',serif;font-weight:400;">页脚</div>
<svg style="left:371.0px;top:707.5px" width="15" height="14" viewBox="0 0 15 14"><g fill="none" stroke="#333" stroke-width="1.500" stroke-linecap="round" stroke-linejoin="round"><path d="M13.500 1v8.500h-12"/></g><path d="M0 9.500l5.500-3v6z" fill="#222"/></svg>
<div class="t" style="left:179.0px;top:766.9px;font-size:19.5px;color:#111;font-family:'Liberation Serif','Noto Serif CJK SC',serif;font-weight:400;">页眉</div>
<svg style="left:371.0px;top:764.5px" width="15" height="14" viewBox="0 0 15 14"><g fill="none" stroke="#333" stroke-width="1.500" stroke-linecap="round" stroke-linejoin="round"><path d="M13.500 1v8.500h-12"/></g><path d="M0 9.500l5.500-3v6z" fill="#222"/></svg>
<div class="t" style="left:28.0px;top:823.3px;font-size:23px;color:#333;font-family:'Liberation Serif','Noto Serif CJK SC',serif;font-weight:300;">正文</div>
<svg style="left:371.0px;top:821.5px" width="15" height="14" viewBox="0 0 15 14"><g fill="none" stroke="#333" stroke-width="1.500" stroke-linecap="round" stroke-linejoin="round"><path d="M13.500 1v8.500h-12"/></g><path d="M0 9.500l5.500-3v6z" fill="#222"/></svg>
<div class="t" style="left:16.0px;top:1061.7px;font-size:20px;color:#3a3d47;">显示:</div>
<div class="abs" style="left:71.0px;top:1053.5px;width:346.0px;height:33.0px;background:#fff;border:1px solid #dcdde2;border-radius:2px"></div>
<div class="t" style="left:76.0px;top:1061.7px;font-size:20px;color:#4a4d57;">有效样式</div>
<div class="dd" style="left:398px;top:1068px;border-top-color:#5a5c66"></div>
</div>
<div class="abs" id="side">
<div class="abs" style="left:0.0px;top:0.0px;width:1.0px;height:1119.0px;background:#e6e7eb"></div>
<div class="abs" style="left:20.0px;top:21.0px;width:33.0px;height:1.3px;background:#d5d6db"></div>
<div class="abs" style="left:20.0px;top:25.5px;width:33.0px;height:1.3px;background:#d5d6db"></div>
<svg style="left:23.0px;top:62.0px" width="28" height="28" viewBox="0 0 28 28"><g fill="none" stroke="#4d4f57" stroke-width="1.700" stroke-linecap="round" stroke-linejoin="round"><path d="M10 18.500c-1.500-1.500-2-2.500-2.500-3.500 1-5 4.500-10 10-12 2.500-1 5.500-1.500 8-1 .5 2.500 0 5.500-1 8-2 5.500-7 9-12 10-1-.5-2-1-2.500-1.500z"/><circle cx="18" cy="10" r="2.600"/><path d="M8 14l-4.500 .5-2 3.500 4.500 .5M13.500 20l-.5 4.500 3.500-2 .5-4"/><path d="M3 22l3.500-3.500M5 25l3-3M1.500 19.500l2-2"/></g></svg>
<div class="abs" style="left:9.5px;top:107.5px;width:54.0px;height:53.5px;background:#e3e5e9;border-radius:3px"></div>
<svg style="left:24.0px;top:121.0px" width="27" height="27" viewBox="0 0 27 27"><g fill="none" stroke="#4d4f57" stroke-width="1.700" stroke-linecap="round" stroke-linejoin="round" stroke-width="1.900"><path d="M7.500 17.500l11.500-14.500 5 4-11.500 14.500z"/><path d="M7.500 17.500l-3.500 4.500c-1 1.500-.5 2.500 1 2.500h3.500l4-3"/><path d="M1 25h25"/></g></svg>
<svg style="left:26.0px;top:181.0px" width="24" height="28" viewBox="0 0 24 28"><path d="M1.500 1.500v21l5.500-4.500 4 9 4-1.800-4-9 8-.5z" fill="none" stroke="#4d4f57" stroke-width="1.700" stroke-linecap="round" stroke-linejoin="round" stroke-width="1.900"/></svg>
<svg style="left:23.0px;top:244.0px" width="28" height="24" viewBox="0 0 28 24"><g fill="none" stroke="#b7b9c1" stroke-width="1.500"><circle cx="5" cy="4.500" r="3"/><path d="M8.500 4.500h18.500"/><circle cx="21" cy="19" r="3"/><path d="M1 19h16.500M24.500 19h2.500"/></g></svg>
<svg style="left:23.5px;top:302.5px" width="26" height="26" viewBox="0 0 26 26"><g fill="none" stroke="#4d4f57" stroke-width="1.700" stroke-linecap="round" stroke-linejoin="round"><circle cx="13" cy="13" r="11.800"/></g></svg>
<div class="t" style="left:31.2px;top:308.3px;font-size:19px;color:#4d4f57;">?</div>
<svg style="left:23.0px;top:363.0px" width="28" height="26" viewBox="0 0 28 26"><g fill="none" stroke="#4d4f57" stroke-width="1.700" stroke-linecap="round" stroke-linejoin="round"><path d="M4 9.500v12.500c0 1 .5 1.500 1.500 1.500h7"/><path d="M2.500 8l2-5.500c.3-.7 .8-1 1.500-1h13c.7 0 1.200 .3 1.500 1l2 5.500c0 2-1.500 3-3 3s-3-1-3-3c0 2-1.500 3-3.500 3s-3.500-1-3.500-3c0 2-1.500 3-3 3s-3.500-1-3.500-3z" transform="translate(1,0)"/><path d="M8.500 14v4.500"/><path d="M20.500 24.500c-5-1.500-6-6-4.500-10 3 1 5.500 4 4.500 10zM20.500 24.500c1-4 3-5.500 6-6 .5 3.500-2 6-6 6zM20.500 24.500v-5"/></g></svg>
<div class="abs" style="left:24.5px;top:1086.0px;width:8.0px;height:8.0px;border:2px solid #44464f;border-radius:50%"></div>
<div class="abs" style="left:34.1px;top:1086.0px;width:8.0px;height:8.0px;border:2px solid #44464f;border-radius:50%"></div>
<div class="abs" style="left:43.7px;top:1086.0px;width:8.0px;height:8.0px;border:2px solid #44464f;border-radius:50%"></div>
<div class="abs" style="left:4.0px;top:1048.0px;width:68.0px;height:1.0px;background:#e8e9ed"></div>
</div>
<div class="abs" id="status">
<div class="t" style="left:13.0px;top:15.1px;font-size:20px;color:#3f4149;">页面: <span style="letter-spacing:1px">1/8</span></div>
<div class="abs" style="left:104.0px;top:12.0px;width:1.0px;height:25.0px;background:#dfe0e4"></div>
<div class="t" style="left:116.0px;top:15.1px;font-size:20px;color:#3f4149;">字数: <span style="letter-spacing:0.8px">3706</span></div>
<div class="abs" style="left:222.0px;top:12.0px;width:1.0px;height:25.0px;background:#dfe0e4"></div>
<svg style="left:238.0px;top:12.5px" width="24" height="24" viewBox="0 0 24 24"><g fill="none" stroke="#3f4149" stroke-width="1.700" stroke-linecap="round" stroke-linejoin="round"><path d="M1.500 1.500h21v17.500h-7.500l-3 3.500-3-3.500h-7.500z"/><path d="M7 10.500l4 3.500 6-7.500"/></g></svg>
<div class="t" style="left:268.0px;top:15.1px;font-size:20px;color:#3f4149;">拼写检查</div>
<div class="abs" style="left:361.0px;top:12.0px;width:1.0px;height:25.0px;background:#dfe0e4"></div>
<svg style="left:377.0px;top:12.5px" width="25" height="24" viewBox="0 0 25 24"><g fill="none" stroke="#3f4149" stroke-width="1.700" stroke-linecap="round" stroke-linejoin="round"><path d="M1.500 1.500h22v17.500h-8l-3 3.500-3-3.500h-8z"/><path d="M9 6.500l7 7.500M16 6.500l-7 7.500"/></g></svg>
<div class="t" style="left:408.0px;top:15.1px;font-size:20px;color:#3f4149;">文档校对</div>
<div class="t" style="left:513.0px;top:15.1px;font-size:20px;color:#3f4149;">兼容模式</div>
<div class="abs" style="left:601.0px;top:12.0px;width:1.0px;height:25.0px;background:#dfe0e4"></div>
<div class="t" style="left:619.0px;top:8.5px;font-size:29px;color:#5e6069;">T</div>
<div class="t" style="left:634.5px;top:17.0px;font-size:19px;color:#3f4149;">?</div>
<div class="t" style="left:650.0px;top:15.1px;font-size:20px;color:#3f4149;">缺失字体</div>
<svg style="left:1755.0px;top:9.0px" width="31" height="30" viewBox="0 0 31 30"><g fill="none" stroke="#3f4149" stroke-width="1.700" stroke-linecap="round" stroke-linejoin="round" stroke-width="1.800"><path d="M1.500 18.500c3.500-6 8-9 14-9s10.500 3 14 9c-3.500 6-8 9-14 9s-10.500-3-14-9z"/><circle cx="15.500" cy="18.500" r="5.300"/><path d="M15.500 1.500v4M5 4l2 3.500M26 4l-2 3.500"/></g></svg>
<div class="abs" style="left:1801.5px;top:12.0px;width:1.0px;height:25.0px;background:#dfe0e4"></div>
<div class="abs" style="left:1817.0px;top:5.0px;width:38.5px;height:38.5px;background:#e1e3e8"></div>
<svg style="left:1825.0px;top:12.5px" width="24" height="26" viewBox="0 0 24 26"><g fill="none" stroke="#3f4149" stroke-width="1.700" stroke-linecap="round" stroke-linejoin="round" stroke-width="1.900"><path d="M1.500 3a1.500 1.500 0 0 1 1.500-1.500h13l6.500 6.500v15a1.500 1.500 0 0 1-1.500 1.500h-18a1.500 1.500 0 0 1-1.500-1.500z"/><path d="M6 10h12M6 15h12M6 20h12" stroke-width="1.600"/></g></svg>
<svg style="left:1868.0px;top:13.0px" width="25" height="24" viewBox="0 0 25 24"><g fill="none" stroke="#3f4149" stroke-width="1.700" stroke-linecap="round" stroke-linejoin="round" stroke-width="1.800"><path d="M1 2.500h2M7 2.500h17M5 9h2M11 9h13M5 15.500h2M11 15.500h13M1 22h2M7 22h17"/></g></svg>
<svg style="left:1908.0px;top:12.5px" width="27" height="26" viewBox="0 0 27 26"><g fill="none" stroke="#3f4149" stroke-width="1.700" stroke-linecap="round" stroke-linejoin="round" stroke-width="1.800"><path d="M13.500 4.500c-2-2-5-3-12-3v18.500c7 0 10 1 12 3 2-2 5-3 12-3v-18.500c-7 0-10 1-12 3zM13.500 4.500v18"/></g></svg>
<svg style="left:1951.0px;top:12.5px" width="25" height="25" viewBox="0 0 25 25"><g fill="none" stroke="#3f4149" stroke-width="1.700" stroke-linecap="round" stroke-linejoin="round" stroke-width="1.700"><circle cx="12.500" cy="12.500" r="11.500"/><ellipse cx="12.500" cy="12.500" rx="5" ry="11.500"/><path d="M1 12.500h23M2.500 6.500h20M2.500 18.500h20"/></g></svg>
<svg style="left:1993.0px;top:10.0px" width="29" height="29" viewBox="0 0 29 29"><g fill="none" stroke="#3f4149" stroke-width="1.700" stroke-linecap="round" stroke-linejoin="round" stroke-width="1.900"><path d="M7 19l13.500-16 5.500 4.500-13.500 16z"/><path d="M7 19l-4 5c-1 1.500-.5 2.500 1 2.500h4l4.500-3.500"/><path d="M1 27.500h17"/></g></svg>
<div class="abs" style="left:2042.0px;top:12.0px;width:1.0px;height:25.0px;background:#dfe0e4"></div>
<svg style="left:2062.0px;top:12.0px" width="26" height="25" viewBox="0 0 26 25"><g fill="none" stroke="#3f4149" stroke-width="1.700" stroke-linecap="round" stroke-linejoin="round" stroke-width="1.900"><path d="M1.500 7v-5.500h6M18.500 1.500h6v5.500M24.500 18v5.500h-6M7.500 23.500h-6v-5.500"/><rect x="7" y="7" width="12" height="11"/></g></svg>
<div class="t" style="left:2099.5px;top:15.3px;font-size:20.5px;color:#3f4149;">100%</div>
<div class="dd" style="left:2160px;top:22.500px;border-top-color:#5a5c66"></div>
<div class="abs" style="left:2188.5px;top:22.8px;width:18.0px;height:3.6px;background:#2f3146;border-radius:1px"></div>
<div class="abs" style="left:2224.0px;top:24.0px;width:114.0px;height:1.8px;background:#6b6d78"></div>
<div class="abs" style="left:2338.0px;top:24.0px;width:117.0px;height:1.8px;background:#e1e2e6"></div>
<div class="abs" style="left:2327.0px;top:14.0px;width:22.0px;height:22.0px;background:#ebebed;border:1.700px solid #7a7c86;border-radius:50%"></div>
<svg style="left:2474.0px;top:16.0px" width="16.5" height="16.5" viewBox="0 0 16.5 16.5"><path d="M8.250 0v16.500M0 8.250h16.500" stroke="#34374f" stroke-width="3" fill="none"/></svg>
<svg style="left:2510.0px;top:11.0px" width="27" height="27" viewBox="0 0 27 27"><g fill="none" stroke="#3f4149" stroke-width="1.700" stroke-linecap="round" stroke-linejoin="round" stroke-width="1.900" stroke="#2f3146"><path d="M2 9v-7h7M2 2l8 8M18 2h7v7M25 2l-8 8M25 18v7h-7M25 25l-8-8M9 25h-7v-7M2 25l8-8"/></g></svg>
</div>
<div class="abs" id="bottom">
<div class="abs" style="left:0.0px;top:66.0px;width:48.0px;height:48.0px;background:#f58220"></div>
<svg style="left:9.0px;top:75.0px" width="30" height="30" viewBox="0 0 30 30"><circle cx="15" cy="9" r="6.500" fill="#fff"/><path d="M1.500 30c0-9 5-13 13.500-13s13.500 4 13.500 13z" fill="#fff"/></svg>
<svg style="left:57.0px;top:76.0px" width="30" height="32" viewBox="0 0 30 32"><rect x="9.500" y="1" width="11" height="18" rx="5.500" fill="#fff"/><path d="M4.500 13c0 7 4.500 10.500 10.500 10.500s10.500-3.500 10.500-10.500M15 23.500v5.500M9 29.500h12" fill="none" stroke="#fff" stroke-width="2.600" stroke-linecap="round"/><path d="M2 27l24-24" stroke="#e0483e" stroke-width="2.800" stroke-linecap="round"/></svg>
<div class="t" style="left:92.5px;top:78.9px;font-size:26px;color:#fff;">潘久伟的屏幕共享</div>
<div class="abs" style="left:1203.5px;top:72.5px;width:11.0px;height:11.0px;border-radius:50%;background:#fff"></div>
<div class="abs" style="left:1231.5px;top:72.5px;width:11.0px;height:11.0px;border-radius:50%;background:#6a6a6a"></div>
<div class="abs" style="left:1259.5px;top:72.5px;width:11.0px;height:11.0px;border-radius:50%;background:#6a6a6a"></div>
<div class="abs" style="left:1287.5px;top:72.5px;width:11.0px;height:11.0px;border-radius:50%;background:#6a6a6a"></div>
<div class="abs" style="left:1315.5px;top:72.5px;width:11.0px;height:11.0px;border-radius:50%;background:#6a6a6a"></div>
<div class="abs" style="left:1343.5px;top:72.5px;width:11.0px;height:11.0px;border-radius:50%;background:#6a6a6a"></div>
</div>
<div class="abs" style="left:2376.0px;top:24.0px;width:160.0px;height:160.0px;background:linear-gradient(#454545 0,#444 50%,#2a2a2a 75%,#111 100%)"></div>
<svg style="left:2404px;top:50.800px" width="104" height="104" viewBox="0 0 104 104"><defs><clipPath id="avc"><circle cx="52" cy="52" r="50.500"/></clipPath><filter id="avb" x="-5%" y="-5%" width="110%" height="110%"><feGaussianBlur stdDeviation="0.9"/></filter></defs><g clip-path="url(#avc)"><g filter="url(#avb)"><rect width="104" height="104" fill="#2b2b2b"/><path d="M0 0h104v20l-40 4-30-6-34 8z" fill="#777"/><path d="M44 4h16l1 5-17 1z" fill="#e6e6e6"/><path d="M46 15l29-7 1 2.500-29 7z" fill="#f0f0f0"/><path d="M56 14h16v16h-16z" fill="#4a4a4a"/><path d="M58 15v14M61 15v14M64 15v14M67 15v14M70 15v14" stroke="#bdbdbd" stroke-width="1"/><path d="M72 12h26v22h-26z" fill="#555"/><path d="M10 22l26-4v14l-26 4z" fill="#5a5a5a"/><rect x="46" y="36" width="30" height="34" fill="#262626"/><path d="M47 42h28M47 49h28M47 56h28M47 63h28" stroke="#5e5e5e" stroke-width="1.800"/><path d="M34 26c2-8 8-12 14-11 5 1 7 5 8 10l2 9-26-3z" fill="#161616"/><path d="M31 28c8-1 20 1 29 6l-1 2.500c-9-2-20-4-29-4z" fill="#0e0e0e"/><path d="M31 33l18 2 1 12-6 9-10-2-4-10z" fill="#a2a2a2"/><path d="M36 36l10 1.500" stroke="#333" stroke-width="1.500"/><path d="M28 44l12 4 6 10-2 30-16 2z" fill="#777"/><path d="M30 50l12 6M30 58l13 5M30 66l12 4M30 74l12 3" stroke="#5a5a5a" stroke-width="1.500"/><path d="M10 32h20v34l-6 0-14 2z" fill="#0a0a0a"/><path d="M2 60l10 4 6 20-6 14-12-8z" fill="#6a6a6a"/><path d="M26 68l22-2 14 8-4 8-30 2z" fill="#b5b5b5"/><path d="M12 82l18-10 12 4-6 20-14 8z" fill="#141414"/><path d="M30 76l38-2 4 30h-40z" fill="#060606"/><path d="M46 64l22 0 2 10-22 1z" fill="#7d7d7d"/><path d="M80 16c6-2 10 2 11 8l6 14 4 30-6 22-14 6-4-20 2-24-4-16z" fill="#1b1b1b"/><path d="M72 40l8-6 3 4-8 8z" fill="#b9b9b9"/><path d="M84 62l8 4-2 12-7-2z" fill="#6e6e6e"/><path d="M70 72l8-2 2 26-8 4z" fill="#7a7a7a"/></g></g><circle cx="52" cy="52" r="50.800" fill="none" stroke="#bcbcbc" stroke-width="2.600"/></svg>
<svg style="left:2382.0px;top:146.5px" width="26" height="30" viewBox="0 0 26 30"><rect x="6.500" y="0" width="12.500" height="21" rx="6.200" fill="#fff"/><path d="M8 18.500a6 6 0 0 0 9.500 0a12 12 0 0 0-9.500 0z" fill="#3fd25a"/><path d="M1.500 12.500c0 8 5 11.500 11.200 11.500s11.200-3.500 11.200-11.500M12.700 24v5" fill="none" stroke="#fff" stroke-width="2.800" stroke-linecap="round"/></svg>
<div class="t" style="left:2409.5px;top:149.8px;font-size:23px;color:#fff;">高水冕</div>
<div class="abs" style="left:2392.0px;top:1452.0px;width:96.0px;height:96.0px;border-radius:50%;background:rgba(44,45,48,.53)"></div>
<svg style="left:2419.0px;top:1474.0px" width="42" height="54" viewBox="0 0 42 54"><defs><clipPath id="mtop"><rect x="0" y="-2" width="42" height="14"/></clipPath></defs><rect x="10.800" y="-0.300" width="20.400" height="36" rx="10.200" fill="#9b9b9c"/><rect x="10.800" y="-0.300" width="20.400" height="36" rx="10.200" fill="#fff" clip-path="url(#mtop)"/><path d="M5 24.500c0 10.500 7 15 16 15s16-4.500 16-15M21 39.500v10M10.500 50.500h21" fill="none" stroke="#9b9b9c" stroke-width="4" stroke-linecap="round"/><path d="M1 45.500l40-39" stroke="#b9574d" stroke-width="4" stroke-linecap="round"/><path d="M29 18.200l12-11.700" stroke="#f0a198" stroke-width="4" stroke-linecap="round" clip-path="url(#mtop)"/></svg>
</body>
</html>
